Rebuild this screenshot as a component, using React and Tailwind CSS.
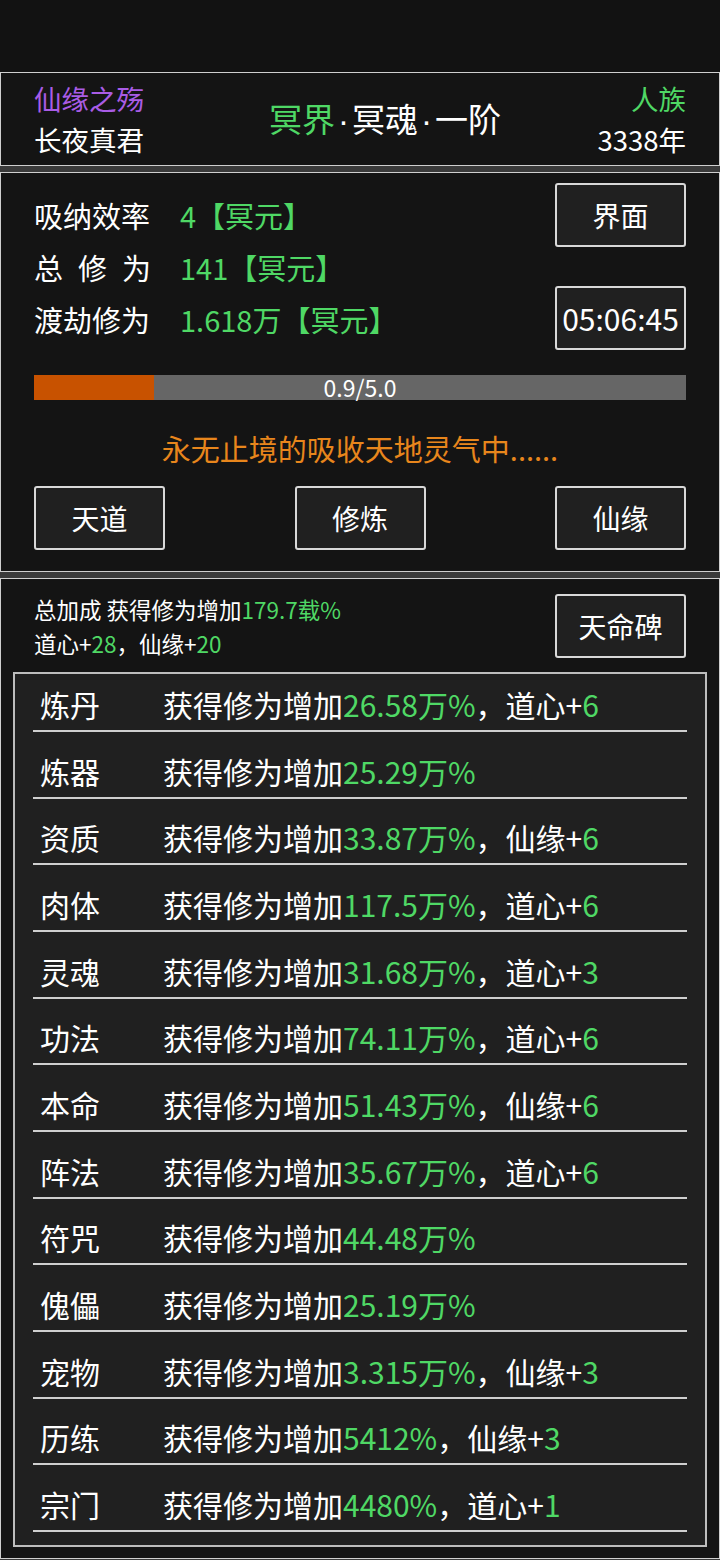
import React from "react";

const G = "text-[#4fd865]";

function Btn({ children, className = "" }) {
  return (
    <div
      className={`flex h-[64px] w-[131px] items-center justify-center rounded-[3px] border-2 border-[#d8d8d8] bg-[#202020] text-[28px] text-white ${className}`}
    >
      {children}
    </div>
  );
}

const rows = [
  ["炼丹", "26.58万%", "道心", "6"],
  ["炼器", "25.29万%"],
  ["资质", "33.87万%", "仙缘", "6"],
  ["肉体", "117.5万%", "道心", "6"],
  ["灵魂", "31.68万%", "道心", "3"],
  ["功法", "74.11万%", "道心", "6"],
  ["本命", "51.43万%", "仙缘", "6"],
  ["阵法", "35.67万%", "道心", "6"],
  ["符咒", "44.48万%"],
  ["傀儡", "25.19万%"],
  ["宠物", "3.315万%", "仙缘", "3"],
  ["历练", "5412%", "仙缘", "3"],
  ["宗门", "4480%", "道心", "1"],
];

const Dot = () => (
  <span className="px-[3px]" style={{ fontFamily: '"Liberation Sans", sans-serif' }}>
    ·
  </span>
);

export default function App() {
  return (
    <div
      className="w-[720px] min-h-[1560px] bg-[#3a3a3a] text-white"
      style={{ fontFamily: '"Noto Sans CJK SC", "Noto Sans", sans-serif' }}
    >
      <div className="h-[72px] bg-[#121212]" />

      {/* header panel */}
      <div className="flex h-[94px] items-center border border-[#cfcfcf] bg-[#141414] px-[33px]">
        <div className="w-[160px] text-[27.5px] leading-[41px]">
          <div className="text-[#a95ce6]">仙缘之殇</div>
          <div>长夜真君</div>
        </div>
        <div className="flex-1 pl-[50px] text-center text-[33px] leading-[44px]">
          <span className={G}>冥界</span>
          <Dot />
          冥魂
          <Dot />
          一阶
        </div>
        <div className="w-[160px] text-right text-[27.5px] leading-[41px]">
          <div className={G}>人族</div>
          <div>3338年</div>
        </div>
      </div>

      <div className="h-[6px]" />

      {/* status panel */}
      <div className="h-[400px] border border-[#cfcfcf] bg-[#141414]">
        <div className="flex justify-between pl-[33px] pr-[33px]">
          <div className="pt-[16px] text-[29px] leading-[52px]">
            <div className="flex">
              <span className="w-[146px]">吸纳效率</span>
              <span className={G}>4【冥元】</span>
            </div>
            <div className="flex">
              <span className="flex w-[117px] justify-between">
                <span>总</span>
                <span>修</span>
                <span>为</span>
              </span>
              <span className="w-[29px]" />
              <span className={G}>141【冥元】</span>
            </div>
            <div className="flex">
              <span className="w-[146px]">渡劫修为</span>
              <span className={G}>1.618万【冥元】</span>
            </div>
          </div>
          <div className="pt-[10px]">
            <Btn>界面</Btn>
            <Btn className="mt-[39px] text-[30px]">05:06:45</Btn>
          </div>
        </div>

        <div className="relative mx-[33px] mt-[25px] h-[25px] bg-[#666666]">
          <div className="h-full w-[18.4%] bg-[#c85200]" />
          <div className="absolute inset-0 flex items-center justify-center text-[23px] leading-none text-white">
            0.9/5.0
          </div>
        </div>

        <div className="mt-[28px] text-center text-[29px] leading-[40px] text-[#e8861c]">
          永无止境的吸收天地灵气中......
        </div>

        <div className="mt-[18px] flex justify-between px-[33px]">
          <Btn>天道</Btn>
          <Btn>修炼</Btn>
          <Btn>仙缘</Btn>
        </div>
      </div>

      <div className="h-[6px]" />

      {/* bonus panel */}
      <div className="h-[981px] border border-[#cfcfcf] bg-[#141414]">
        <div className="flex justify-between pl-[33px] pr-[33px]">
          <div className="pt-[13px] text-[22.5px] leading-[34px]">
            <div>
              总加成 获得修为增加<span className={G}>179.7载%</span>
            </div>
            <div>
              道心+<span className={G}>28</span>，仙缘+<span className={G}>20</span>
            </div>
          </div>
          <div className="pt-[15px]">
            <Btn>天命碑</Btn>
          </div>
        </div>

        <div className="ml-[12px] mt-[12px] w-[694px] border-2 border-[#bdbdbd] bg-[#202020] px-[18px] pb-[13px]">
          {rows.map(([label, val, k, v], i) => (
            <div
              key={label}
              className={`flex items-end border-b-2 border-[#cfcfcf] pb-[6px] pl-[7px] text-[30px] leading-[40px] ${
                i === 0 ? "h-[58px]" : "h-[66.67px]"
              }`}
            >
              <span className="w-[123px]">{label}</span>
              <span>
                获得修为增加<span className={G}>{val}</span>
                {k ? (
                  <>
                    ，{k}+<span className={G}>{v}</span>
                  </>
                ) : null}
              </span>
            </div>
          ))}
        </div>
      </div>
    </div>
  );
}
